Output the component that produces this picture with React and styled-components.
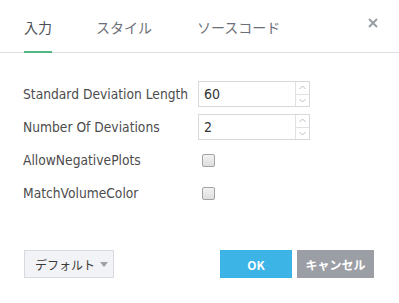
import React from "react";
import styled, { createGlobalStyle } from "styled-components";

const Global = createGlobalStyle`
  html, body { margin: 0; padding: 0; background: #fff; }
  body {
    font-family: "DejaVu Sans Condensed", "DejaVu Sans", "Noto Sans CJK JP", sans-serif;
    font-stretch: condensed;
  }
`;

const Dialog = styled.div`
  width: 399px;
  height: 303px;
  display: flex;
  flex-direction: column;
  box-sizing: border-box;
  background: #fff;
`;

const Header = styled.div`
  display: flex;
  align-items: stretch;
  height: 53px;
  box-sizing: border-box;
  border-bottom: 1px solid #dcdee1;
  padding: 0 0 0 24px;
`;

const Tab = styled.div`
  display: flex;
  align-items: center;
  box-sizing: border-box;
  padding-top: 2px;
  margin-right: ${(p) => p.$mr}px;
  font-family: "Noto Sans CJK JP", sans-serif;
  font-size: 14px;
  color: ${(p) => (p.$active ? "#4a4f57" : "#6b7078")};
  border-bottom: 2px solid ${(p) => (p.$active ? "#52b784" : "transparent")};
  margin-bottom: -1px;
`;

const Close = styled.div`
  margin-left: auto;
  width: 52px;
  display: flex;
  justify-content: center;
  padding-top: 18px;
  box-sizing: border-box;
`;

const Body = styled.div`
  display: flex;
  flex-direction: column;
  gap: 7px;
  padding: 28px 0 0 23px;
`;

const Row = styled.div`
  display: grid;
  grid-template-columns: 175px 112px;
  align-items: center;
  height: 26px;
`;

const Label = styled.div`
  font-size: 13.7px;
  color: #4d4d4d;
  white-space: nowrap;
`;

const NumBox = styled.div`
  display: flex;
  height: 26px;
  box-sizing: border-box;
  border: 1px solid #d6d8db;
`;

const NumText = styled.div`
  flex: 1;
  display: flex;
  align-items: center;
  padding-left: 5px;
  font-size: 14px;
  color: #333;
`;

const Spin = styled.div`
  width: 13px;
  border-left: 1px solid #dfe1e4;
  display: flex;
  flex-direction: column;
`;

const SpinBtn = styled.div`
  flex: 1;
  display: flex;
  align-items: center;
  justify-content: center;
  border-top: ${(p) => (p.$bottom ? "1px solid #dfe1e4" : "none")};
`;

const Check = styled.div`
  width: 11px;
  height: 11px;
  margin-left: 4px;
  border: 1px solid #a3a3a3;
  border-radius: 2px;
  background: linear-gradient(#f2f2f2, #dedede);
`;

const Footer = styled.div`
  margin-top: auto;
  display: flex;
  align-items: center;
  padding: 0 25px 25px 24px;
`;

const DefaultBtn = styled.div`
  width: 90px;
  height: 28px;
  box-sizing: border-box;
  border: 1px solid #d6d9de;
  background: #f1f3f6;
  display: flex;
  align-items: center;
  gap: 5px;
  padding-left: 10px;
  font-family: "Noto Sans CJK JP", sans-serif;
  font-size: 12px;
  color: #3a3a3a;
  white-space: nowrap;
`;

const Spacer = styled.div`
  flex: 1;
`;

const ActionBtn = styled.div`
  width: ${(p) => p.$w}px;
  height: 28px;
  margin-left: ${(p) => p.$ml}px;
  background: ${(p) => p.$bg};
  color: #fff;
  display: flex;
  align-items: center;
  justify-content: center;
  font-family: "Noto Sans CJK JP", sans-serif;
  font-weight: 700;
  font-size: 12px;
  white-space: nowrap;
`;

const Up = () => (
  <svg width="7" height="5" viewBox="0 0 7 5">
    <path d="M0.5 4 L3.5 1 L6.5 4" fill="none" stroke="#b8bcc2" strokeWidth="1" />
  </svg>
);
const Down = () => (
  <svg width="7" height="5" viewBox="0 0 7 5">
    <path d="M0.5 1 L3.5 4 L6.5 1" fill="none" stroke="#b8bcc2" strokeWidth="1" />
  </svg>
);

const NumberField = ({ value }) => (
  <NumBox>
    <NumText>{value}</NumText>
    <Spin>
      <SpinBtn>
        <Up />
      </SpinBtn>
      <SpinBtn $bottom>
        <Down />
      </SpinBtn>
    </Spin>
  </NumBox>
);

export default function App() {
  return (
    <>
      <Global />
      <Dialog>
        <Header>
          <Tab $active $mr={44}>入力</Tab>
          <Tab $mr={45}>スタイル</Tab>
          <Tab $mr={0}>ソースコード</Tab>
          <Close>
            <svg width="10" height="10" viewBox="0 0 10 10">
              <path d="M1 1 L9 9 M9 1 L1 9" stroke="#9a9ea5" strokeWidth="2" />
            </svg>
          </Close>
        </Header>
        <Body>
          <Row>
            <Label>Standard Deviation Length</Label>
            <NumberField value="60" />
          </Row>
          <Row>
            <Label>Number Of Deviations</Label>
            <NumberField value="2" />
          </Row>
          <Row>
            <Label>AllowNegativePlots</Label>
            <Check />
          </Row>
          <Row>
            <Label>MatchVolumeColor</Label>
            <Check />
          </Row>
        </Body>
        <Footer>
          <DefaultBtn>
            デフォルト
            <svg width="8" height="5" viewBox="0 0 8 5">
              <path d="M0 0 L8 0 L4 5 Z" fill="#a0a0a0" />
            </svg>
          </DefaultBtn>
          <Spacer />
          <ActionBtn $w={72} $ml={0} $bg="#3cb4e5">OK</ActionBtn>
          <ActionBtn $w={77} $ml={5} $bg="#9b9ea5">キャンセル</ActionBtn>
        </Footer>
      </Dialog>
    </>
  );
}
